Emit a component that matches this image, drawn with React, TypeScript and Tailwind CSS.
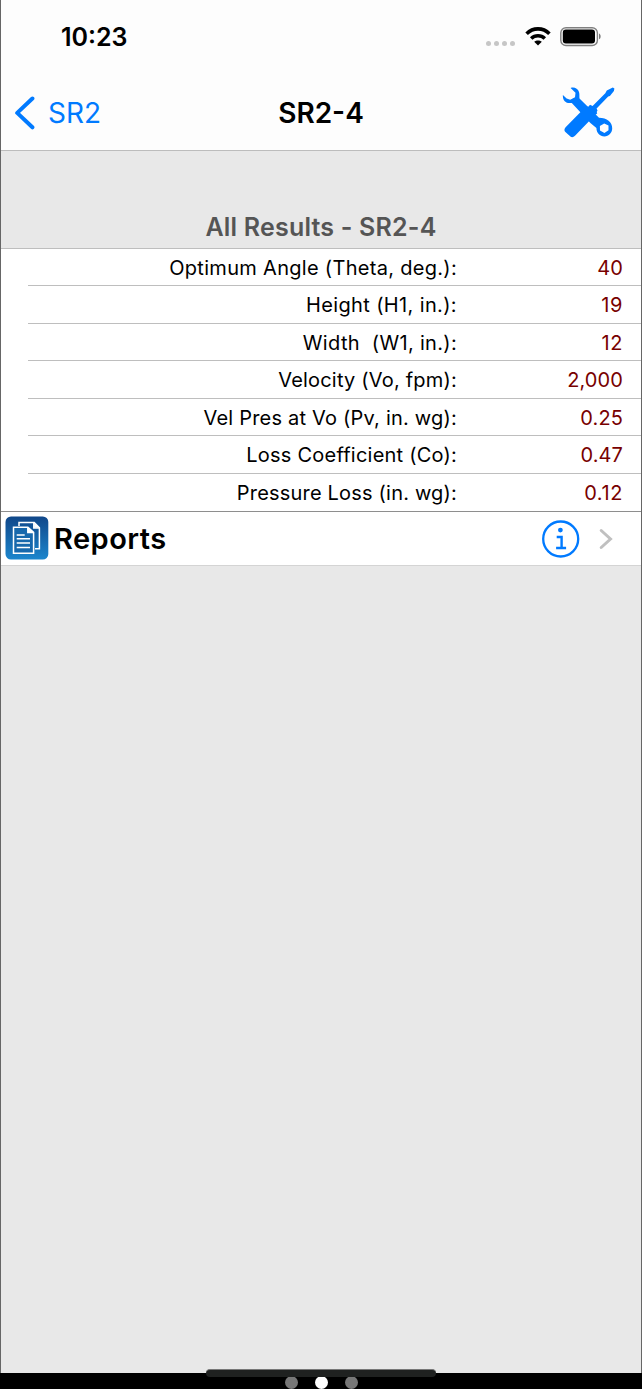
import React from 'react';

interface Result {
  label: string;
  value: string;
  height: string;
  tracking: string;
  valueTracking: string;
}

const results: Result[] = [
  { label: 'Optimum Angle (Theta, deg.):', value: '40', height: 'h-[37px]', tracking: 'tracking-[0.3px]', valueTracking: 'tracking-[0.1px]' },
  { label: 'Height (H1, in.):', value: '19', height: 'h-[38px]', tracking: 'tracking-[0.37px]', valueTracking: 'tracking-[0.6px]' },
  { label: 'Width  (W1, in.):', value: '12', height: 'h-[37px]', tracking: 'tracking-[0.32px]', valueTracking: 'tracking-[0.6px]' },
  { label: 'Velocity (Vo, fpm):', value: '2,000', height: 'h-[38px]', tracking: 'tracking-[0.2px]', valueTracking: 'tracking-[0.1px]' },
  { label: 'Vel Pres at Vo (Pv, in. wg):', value: '0.25', height: 'h-[37px]', tracking: 'tracking-[0.21px]', valueTracking: 'tracking-[0.1px]' },
  { label: 'Loss Coefficient (Co):', value: '0.47', height: 'h-[38px]', tracking: 'tracking-[0.22px]', valueTracking: 'tracking-[0.1px]' },
  { label: 'Pressure Loss (in. wg):', value: '0.12', height: 'h-[37px]', tracking: 'tracking-[0.19px]', valueTracking: 'tracking-[0.6px]' },
];

function WifiIcon() {
  return (
    <svg className="ml-[9px] h-[20px] w-[26px]" viewBox="0 0 26 20" fill="none">
      <path d="M1.6 6.7C8 .3 18 .3 24.4 6.7" stroke="#000" strokeWidth="3.6" />
      <path d="M6.2 11.4C10 7.7 16 7.7 19.8 11.4" stroke="#000" strokeWidth="3.5" />
      <path d="M9.2 14.8c2.2-1.9 5.4-1.9 7.6 0L13 18.6z" fill="#000" />
    </svg>
  );
}

function BatteryIcon() {
  return (
    <svg className="ml-[9px] h-[20px] w-[42px]" viewBox="0 0 42 20" fill="none">
      <rect x="0.8" y="0.7" width="36.6" height="17.8" rx="5.2" stroke="#808080" strokeWidth="1.4" />
      <rect x="2.8" y="2.5" width="32.2" height="14" rx="3" fill="#000" />
      <path d="M39 6.5v5.8c2.2-.9 2.2-4.9 0-5.8z" fill="#777" />
    </svg>
  );
}

function ToolsIcon() {
  return (
    <svg className="h-[52px] w-[54px]" viewBox="0 0 54 52" fill="#007aff">
      {/* wrench */}
      <path
        d="M8.6.9C12-.4 15.8 1.2 17 5c.7 2.2.2 4.4.5 6.4L37 30.8C45 31 50.2 35 50.2 41.3c0 4.6-3.4 8.1-7.8 8.1-4.6 0-7.9-3.6-8-8.5L28.4 36 9.8 15.9C4.4 17 .4 14 .9 8l3.7 3.6 3.6 1.1 4.8-2.4.5-4.6zM42.2 36.4l-4.3 2.5.1 4.7 4.4 2.3 4.1-2.6v-4.7z"
        fillRule="evenodd"
      />
      {/* screwdriver */}
      <path d="M44.8 3.5L50.8.6l1.6.8-.5 2.7-4 4.9-1.7.6-11.6 11.8.9 2.2-.8 1.3.5 1.6-2.4 1.8L13 48.8c-1.5 1.6-3.1 2-4.6.7l-5-4.4c-1.4-1.5-1.2-3.3.2-4.8L23.5 20l3.1-.5 1.4-1.8 2.6 1.4L43.3 6.3z" />
    </svg>
  );
}

function ReportsIcon() {
  return (
    <svg className="mb-[2px] ml-[4px] h-[44px] w-[44px]" viewBox="0 0 44 44" fill="none">
      <defs>
        <linearGradient id="reports" x1="0" y1="0" x2="0" y2="1">
          <stop offset="0" stopColor="#104789" />
          <stop offset="1" stopColor="#1c86cd" />
        </linearGradient>
      </defs>
      <rect x="0.5" y="0.5" width="42.8" height="43" rx="5.5" fill="url(#reports)" />
      <g stroke="#fff" strokeWidth="1.5">
        <path d="M14 10V6.5h15.2l5.2 5.2v21H30" />
        <path d="M28.8 6.7v5.4h5.4" />
        <path d="M8.5 11.2h14.4l5.7 5.2v20.8H8.5z" fill="#1768ac" />
        <path d="M22.8 11.4v5.2H28" />
        <path d="M11.7 18.9h8M11.7 22.8H25M11.7 27H25M11.7 31.5H25" />
      </g>
      <path d="M22.8 11.2l5.3 5.2h-5.3zM29.1 6.5l5.3 5.2h-5.3z" fill="#fff" />
    </svg>
  );
}

function InfoIcon() {
  return (
    <svg className="h-[38px] w-[38px]" viewBox="0 0 38 38" fill="none">
      <circle cx="18.7" cy="19" r="17.5" stroke="#007aff" strokeWidth="2.3" />
      <circle cx="18.4" cy="10.1" r="2.4" fill="#007aff" />
      <path d="M14.7 17h4.9v11M14.1 28h10" stroke="#007aff" strokeWidth="2.4" />
    </svg>
  );
}

function ResultRow({ result, last }: { result: Result; last: boolean }) {
  return (
    <div className={`${result.height} pl-[27px]`}>
      <div
        className={`flex h-full items-center pt-px text-[20px] ${last ? '' : 'border-b border-[#bebebe]'}`}
      >
        <span className={`w-[429px] whitespace-pre text-right ${result.tracking}`}>{result.label}</span>
        <span className={`flex-1 pr-[18px] text-right text-[#780000] ${result.valueTracking}`}>{result.value}</span>
      </div>
    </div>
  );
}

export default function App() {
  return (
    <div className="flex h-[1389px] w-[642px] flex-col overflow-hidden bg-black font-['Inter',sans-serif] text-black">
      <div className="flex h-[1373px] flex-col border-x border-[#666] bg-[#e8e8e8]">
        <header className="h-[151px] border-b border-[#bcbcbc] bg-[#fdfdfd]">
          <div className="flex h-[74px] items-center pl-[60px] pr-[39px]">
            <span className="flex-1 pt-[2px] text-[25px] font-semibold">10:23</span>
            <div className="mr-px mt-[12px] flex gap-[3px]">
              {[0, 1, 2, 3].map((i) => (
                <span key={i} className="h-[5px] w-[5px] rounded-full bg-[#c6c6c6]" />
              ))}
            </div>
            <WifiIcon />
            <BatteryIcon />
          </div>
          <div className="grid h-[76px] grid-cols-[1fr_auto_1fr] items-center pt-[2px]">
            <button className="flex items-center pl-[13px] text-[28px] text-[#007aff]">
              <svg className="mr-[13px] h-[34px] w-[21px]" viewBox="0 0 21 34" fill="none">
                <path d="M18.4 2.5L3.2 16.9l15.2 14.4" stroke="#007aff" strokeWidth="4" strokeLinecap="round" strokeLinejoin="round" />
              </svg>
              SR2
            </button>
            <h1 className="text-[28px] font-semibold">SR2-4</h1>
            <div className="flex justify-end pr-[25px]">
              <ToolsIcon />
            </div>
          </div>
        </header>

        <h2 className="flex h-[98px] items-end justify-center border-b border-[#bebebe] pb-[2px] text-[25px] font-semibold tracking-[0.2px] text-[#555]">
          All Results - SR2-4
        </h2>

        <main className="bg-white">
          {results.map((result, i) => (
            <ResultRow key={result.label} result={result} last={i === results.length - 1} />
          ))}
          <div className="flex h-[55px] items-center border-y border-t-[#8e8e8e] border-b-[#d4d4d4]">
            <ReportsIcon />
            <span className="ml-[5px] flex-1 pt-px text-[29px] font-semibold tracking-[0.45px]">Reports</span>
            <InfoIcon />
            <svg className="ml-[18px] mr-[27px] h-[24px] w-[16px]" viewBox="0 0 16 24" fill="none">
              <path d="M3.2 3.5l9.3 8.5-9.3 8.5" stroke="#c0c0c0" strokeWidth="3" strokeLinecap="round" />
            </svg>
          </div>
        </main>
      </div>

      <div className="relative flex h-[16px] justify-center gap-[17px] pt-[3px]">
        <span className="h-[13px] w-[13px] rounded-full bg-[#777]" />
        <span className="h-[13px] w-[13px] rounded-full bg-white" />
        <span className="h-[13px] w-[13px] rounded-full bg-[#777]" />
        <div className="absolute -top-[4px] left-[206px] h-[8px] w-[230px] rounded-full border-t border-[#777] bg-[#1f2120]" />
      </div>
    </div>
  );
}
